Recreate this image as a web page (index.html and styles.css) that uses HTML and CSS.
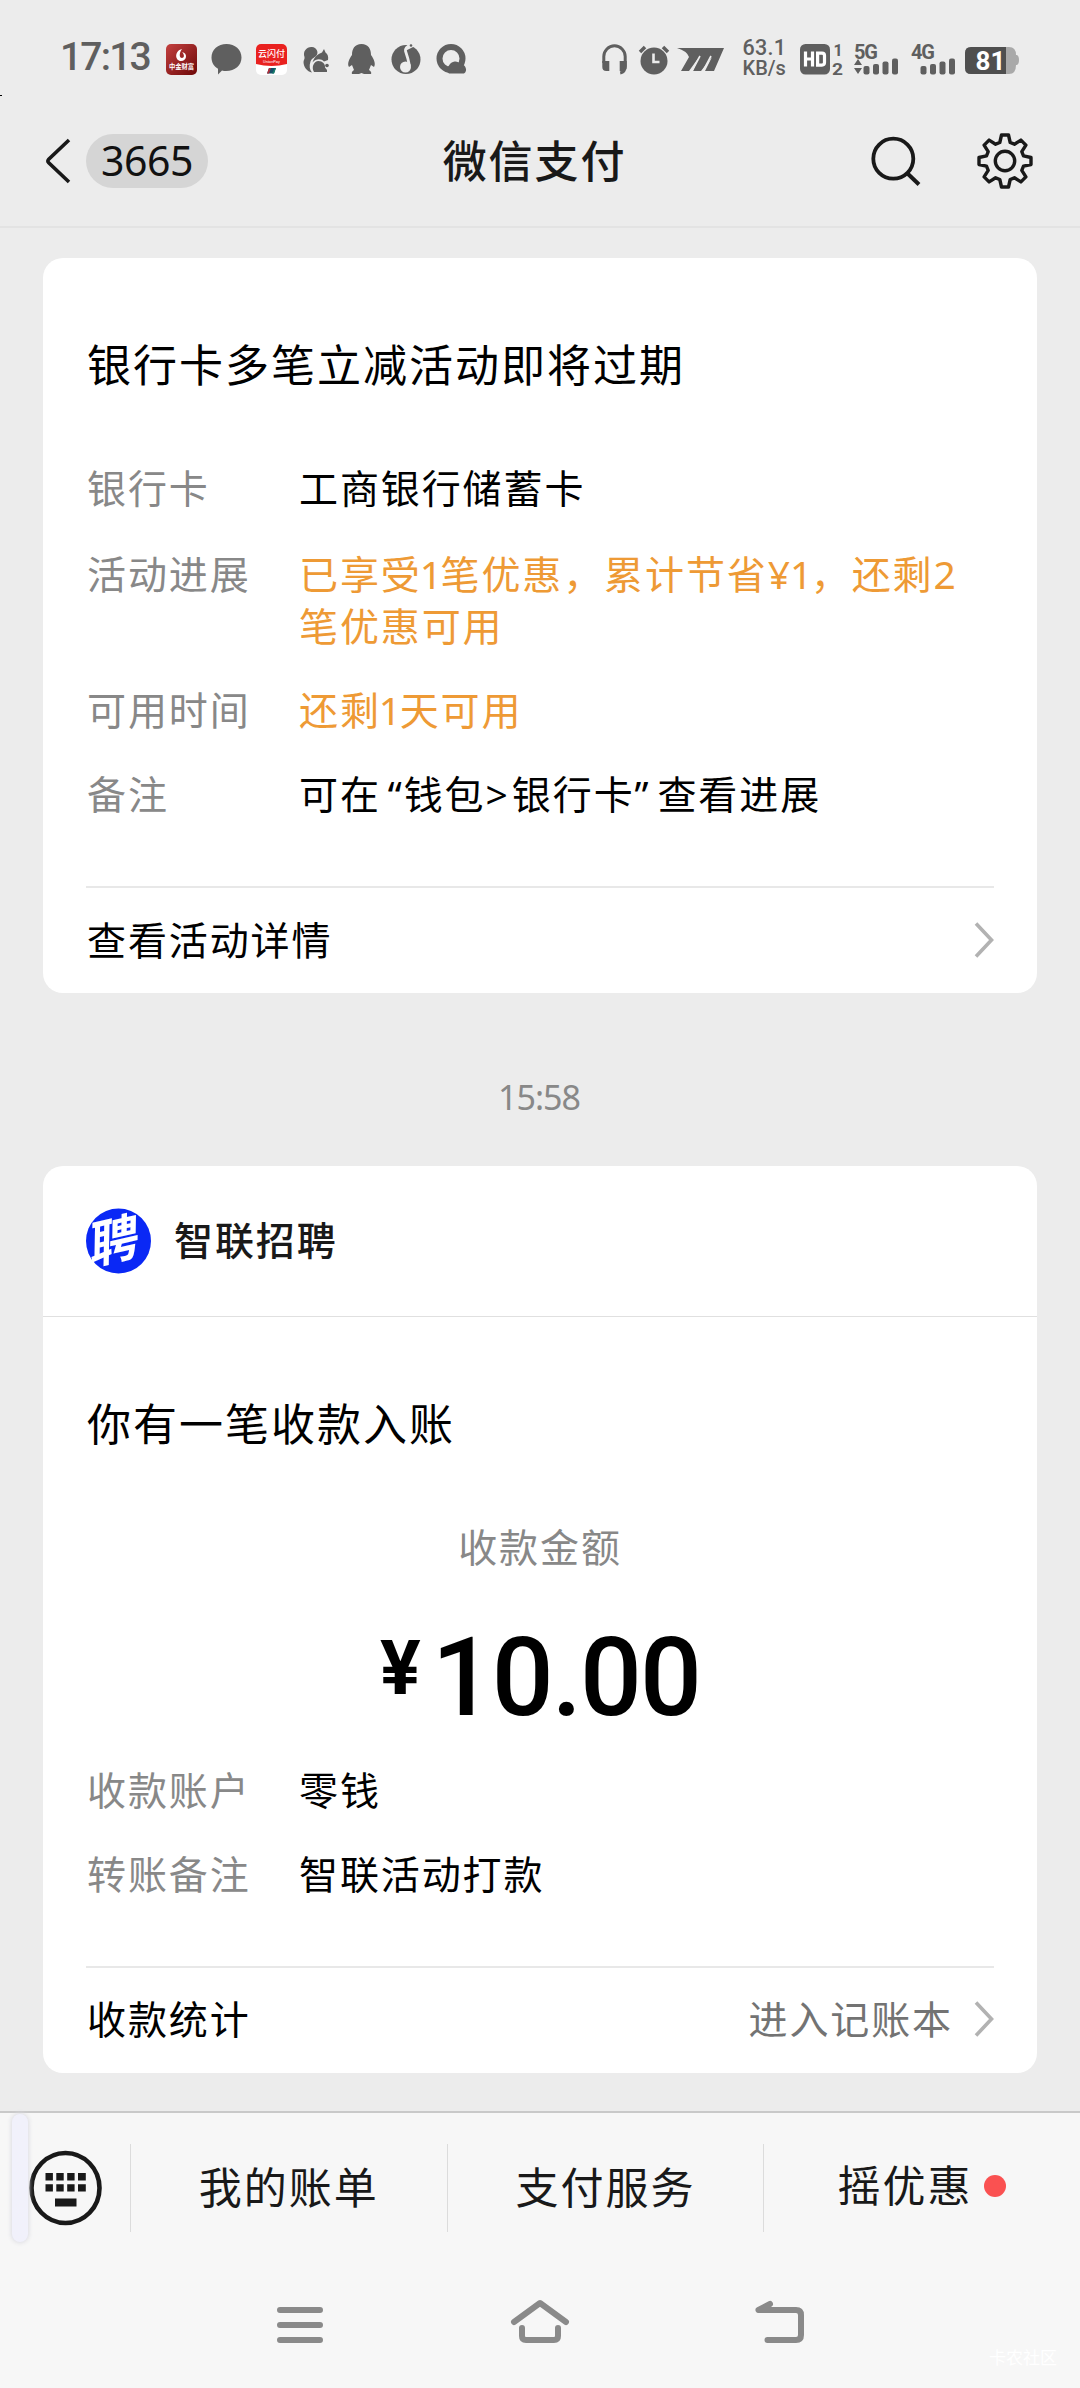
FILE: index.html
```html
<!DOCTYPE html>
<html lang="zh-CN">
<head>
<meta charset="utf-8">
<title>微信支付</title>
<link rel="stylesheet" href="styles.css">
</head>
<body>
<div class="screen">
  <header class="statusbar">
    <div class="clock">17:13</div>
    <div class="notices">
      <svg width="31" height="31" viewBox="0 0 31 31"><defs><linearGradient id="r" x1="0" y1="0" x2="1" y2="1"><stop offset="0" stop-color="#c4403f"/><stop offset="1" stop-color="#6d0808"/></linearGradient></defs><rect width="31" height="31" rx="5" fill="url(#r)"/><path d="M16 5c-8 2-7 12-1 12 6 0 7-8 1-9 3 3 2 6 0 6-3 0-3-5 0-9z" fill="#fff"/><text x="15.5" y="25" text-anchor="middle" font-size="6.3" font-weight="700" fill="#fff">中金财富</text></svg>
      <svg width="31" height="31" viewBox="0 0 31 31"><path d="M15.500 0C24 0 30.500 5.600 30.500 13.500S24 27 15 27q-2 0-4-.5L7 30.500V24.800C3 22.500.5 18.500.5 13.500.5 5.600 7 0 15.500 0z" fill="#5f5f5f"/></svg>
      <svg width="31" height="31" viewBox="0 0 31 31"><rect width="31" height="31" rx="5" fill="#fff"/><path d="M0 20V5a5 5 0 015-5h21a5 5 0 015 5v15q-15.500 4-31 0z" fill="#e9211f"/><text x="15.500" y="13" text-anchor="middle" font-size="9" font-weight="500" fill="#fff">云闪付</text><text x="15.500" y="18.500" text-anchor="middle" font-size="4" fill="#fff">UnionPay</text><path d="M13 24h7l-2 5.500h-7z" fill="#164f67"/><path d="M13 24h2l-2 5.500h-2z" fill="#b32d3a"/><path d="M19 24h1l-2 5.500h-2z" fill="#16806b"/></svg>
      <svg width="31" height="31" viewBox="0 0 31 31"><g fill="#5f5f5f"><path d="M3.500 13C1.500 7 6 2.500 11 3c4.500.5 7 5 4.500 8.500-1.500 2-4.500 2.500-6 6C8 22 8.500 25.500 11 28.500 6 27.500 2.500 23 2.500 18c0-2 1.500-3 1-5z"/><path d="M11.500 18.500C13 13.500 16.500 10 21 8.500L23 5l1.500 3.500C27 10 27.500 13 27 16l-4 1.500c-3-3-8-3-11.500 1z"/><path d="M17.500 17c4 0 7 3 6.500 6.500l2 2.500v2H13c-3-5 0-11 4.500-11z"/><circle cx="26" cy="21.500" r="1.800"/></g></svg>
      <svg width="31" height="31" viewBox="0 0 31 31"><path d="M15.500 0c7 0 9.500 5 9.500 11 3 4 5 9 3 12l-3-2-2 5q3 2 2 4h-7l-2.500-1L13 30H6q-1-2 2-4l-2-5-3 2c-2-3 0-8 3-12 0-6 2.500-11 9.500-11z" fill="#5f5f5f"/></svg>
      <svg width="31" height="31" viewBox="0 0 31 31"><circle cx="15" cy="15.500" r="14.500" fill="#5f5f5f"/><g fill="none" stroke="#ececec" stroke-width="2.800"><path d="M20 1Q14 3 14.500 7 17 14 18.500 22"/><path d="M15 5L22 1.500"/></g><circle cx="14.500" cy="23" r="5.500" fill="#ececec"/><circle cx="20" cy="1.500" r="1.300" fill="#5f5f5f"/></svg>
      <svg width="31" height="31" viewBox="0 0 31 31"><circle cx="15" cy="14.500" r="11.500" fill="none" stroke="#5f5f5f" stroke-width="6"/><path d="M13 29.500a5 5 0 010-8 7 7 0 0112-1 5 5 0 013 9z" fill="#5f5f5f"/></svg>
    </div>
    <div class="system">
      <svg class="headset" width="25" height="31" viewBox="0 0 25 31"><path d="M1.800 19V12.500a10.500 10.500 0 0121.400 0V22q0 6-5 7" fill="none" stroke="#5f5f5f" stroke-width="3"/><path d="M.3 17h7v10h-3a4 4 0 01-4-4zM24.700 17h-7v10h3a4 4 0 004-4z" fill="#5f5f5f"/></svg>
      <svg class="alarm" width="30" height="31" viewBox="0 0 30 31"><circle cx="15" cy="17" r="13.500" fill="#5f5f5f"/><path d="M1 8l5-5M29 8l-5-5" stroke="#5f5f5f" stroke-width="3.500"/><path d="M14.500 9.500v8.500h6" fill="none" stroke="#ececec" stroke-width="2.600"/></svg>
      <svg class="sport" width="48" height="31" viewBox="0 0 48 31"><path d="M0 4h47l-10 23H28l7-14-11 14H16l6-14L12 27H4l8-14Q10 7 0 4z" fill="#5f5f5f"/><path d="M23 12l-8 15M34 12l-8 15" stroke="#ececec" stroke-width="1.600"/></svg>
      <div class="speed"><span>63.1</span><span class="unit">KB/s</span></div>
      <svg class="hd" width="43" height="31" viewBox="0 0 43 31"><rect width="30" height="30.500" rx="5.500" fill="#5f5f5f"/><g fill="none" stroke="#fff" stroke-width="3.200"><path d="M5.500 7.500v15M12.500 7.500v15M5.500 15h7M17.600 9.100H22q2.500 0 2.500 2.500v7q0 2.500-2.500 2.500h-4.400z"/></g><text x="33.500" y="12" font-size="16" font-weight="700" fill="#5f5f5f">1</text><text x="32" y="30.500" font-size="16" font-weight="700" fill="#5f5f5f" textLength="11" lengthAdjust="spacingAndGlyphs">2</text></svg>
      <svg class="signal" width="46" height="31" viewBox="0 0 46 31"><text x="0" y="14.500" font-size="20" font-weight="700" fill="#5f5f5f" textLength="24">5G</text><path d="M0 21l4-6 4 6zM0 24h8l-4 6z" fill="#5f5f5f"/><g fill="#5f5f5f"><rect x="9.500" y="22" width="6" height="8.500" rx="2"/><rect x="19" y="20" width="6" height="10.500" rx="2"/><rect x="28.500" y="17.500" width="6" height="13" rx="2"/><rect x="38" y="14.500" width="6" height="16" rx="2"/></g></svg>
      <svg class="signal second" width="46" height="31" viewBox="0 0 46 31"><text x="0" y="14.500" font-size="20" font-weight="700" fill="#5f5f5f" textLength="24">4G</text><g fill="#5f5f5f"><rect x="9.500" y="22" width="6" height="8.500" rx="2"/><rect x="19" y="20" width="6" height="10.500" rx="2"/><rect x="28.500" y="17.500" width="6" height="13" rx="2"/><rect x="38" y="14.500" width="6" height="16" rx="2"/></g></svg>
      <svg class="battery" width="54" height="31" viewBox="0 0 54 31"><path d="M6 3h38q7 0 7 8h1q2 1 2 5t-2 5h-1q0 9-7 9H6q-6 0-6-6V9q0-6 6-6z" fill="#a9a9a9"/><path d="M6 3h35v27H6q-6 0-6-6V9q0-6 6-6z" fill="#4f4f4f"/><text x="25.500" y="26" text-anchor="middle" font-size="26" font-weight="700" fill="#fff">81</text></svg>
    </div>
    <i class="speck"></i>
  </header>

  <nav class="titlebar">
    <div class="back">
      <svg width="26" height="48" viewBox="0 0 26 48"><path d="M24 3L3.500 22.500q-1.200 1.500 0 3L24 45" fill="none" stroke="#191919" stroke-width="3.600"/></svg>
      <span class="unread">3665</span>
    </div>
    <h1 class="heading">微信支付</h1>
    <div class="actions">
      <svg width="54" height="54" viewBox="0 0 54 54"><circle cx="25.300" cy="24.700" r="20" fill="none" stroke="#191919" stroke-width="3.800"/><path d="M39 39l12 11.500" stroke="#191919" stroke-width="4"/></svg>
      <svg width="56" height="56" viewBox="-28 -28 56 56"><g fill="none" stroke="#191919" stroke-width="3.400" stroke-linejoin="round"><path d="M-5.200-18.500L-3.500-26H3.500L5.200-18.500 9.400-16.800 15.900-20.900 20.900-15.900 16.800-9.400 18.500-5.200 26-3.500V3.500L18.500 5.200 16.800 9.400 20.900 15.900 15.900 20.900 9.400 16.800 5.200 18.500 3.500 26H-3.500L-5.200 18.500-9.400 16.800-15.900 20.900-20.900 15.900-16.800 9.400-18.500 5.200-26 3.500V-3.500L-18.500-5.200-16.800-9.400-20.900-15.900-15.900-20.900-9.400-16.800z"/><circle r="9.700"/></g></svg>
    </div>
  </nav>

  <main class="feed">
    <section class="card">
      <div class="content">
        <h2 class="card-title">银行卡多笔立减活动即将过期</h2>
        <dl class="details">
          <div class="row lead"><dt>银行卡</dt><dd>工商银行储蓄卡</dd></div>
          <div class="row"><dt>活动进展</dt><dd class="hot">已享受<span class="one">1</span>笔优惠，累计节省¥<span class="one">1</span>，还剩2<br>笔优惠可用</dd></div>
          <div class="row"><dt>可用时间</dt><dd class="hot">还剩<span class="one">1</span>天可用</dd></div>
          <div class="row"><dt>备注</dt><dd>可在<span class="open">“</span>钱包<span class="gt">&gt;</span>银行卡<span class="close">”</span>查看进展</dd></div>
        </dl>
        <div class="more">
          <span>查看活动详情</span>
          <svg class="chevron" width="20" height="36" viewBox="0 0 20 36"><path d="M2 1.500L17.500 18 2 34.500" fill="none" stroke="#b2b2b2" stroke-width="3.600"/></svg>
        </div>
      </div>
    </section>

    <time class="stamp">15:58</time>

    <section class="card">
      <div class="merchant">
        <svg width="66" height="66" viewBox="0 0 66 66"><circle cx="32.500" cy="33" r="32.500" fill="#0a28f5"/><text transform="translate(4 57) rotate(-13) skewX(-14)" font-size="50" font-weight="700" fill="#fff">聘</text></svg>
        <span>智联招聘</span>
      </div>
      <div class="content">
        <h2 class="card-title">你有一笔收款入账</h2>
        <div class="amount-label">收款金额</div>
        <div class="amount"><span class="yen">¥</span><span class="number">10.00</span></div>
        <dl class="details receipt">
          <div class="row"><dt>收款账户</dt><dd>零钱</dd></div>
          <div class="row"><dt>转账备注</dt><dd>智联活动打款</dd></div>
        </dl>
        <div class="more">
          <span>收款统计</span>
          <span class="link">进入记账本</span>
          <svg class="chevron" width="20" height="36" viewBox="0 0 20 36"><path d="M2 1.500L17.500 18 2 34.500" fill="none" stroke="#b2b2b2" stroke-width="3.600"/></svg>
        </div>
      </div>
    </section>
  </main>

  <footer class="bottom">
    <i class="handle"></i>
    <div class="menu">
      <div class="keyboard"><svg width="74" height="76" viewBox="0 0 74 76"><ellipse cx="36.500" cy="38" rx="34" ry="35" fill="none" stroke="#191919" stroke-width="4.600"/><path d="M16.500 23h7.400v7.400h-7.400zM27.300 23h7.400v7.400h-7.400zM38.200 23h7.400v7.400h-7.400zM49 23h7.800v7.400H49zM16.500 34.200h7.400v7.400h-7.400zM27.300 34.200h7.400v7.400h-7.400zM38.200 34.200h7.400v7.400h-7.400zM49 34.200h7.800v7.400H49zM26 48.500h21.500v8H26z" fill="#191919"/></svg></div>
      <div class="item">我的账单</div>
      <div class="item">支付服务</div>
      <div class="item promo">摇优惠<i class="dot"></i></div>
    </div>
    <div class="navkeys">
      <svg width="60" height="50" viewBox="0 0 60 50"><path d="M10 10h40M10 25h40M10 40h40" stroke="#8a8a8a" stroke-width="6" stroke-linecap="round"/></svg>
      <svg width="60" height="50" viewBox="0 0 60 50"><g fill="none" stroke="#8a8a8a" stroke-width="6" stroke-linecap="round" stroke-linejoin="round"><path d="M4 22L30 3 56 22M12 28v8q0 4 4 4h28q4 0 4-4v-8"/></g></svg>
      <svg width="60" height="50" viewBox="0 0 60 50"><path d="M20 4L8.500 10H46q5 0 5 5v20q0 5-5 5H17.500" fill="none" stroke="#8a8a8a" stroke-width="6" stroke-linecap="round" stroke-linejoin="round"/></svg>
    </div>
    <span class="mark">卡农社区</span>
  </footer>
</div>
</body>
</html>
```
FILE: styles.css
```css
* { box-sizing: border-box; }

body {
  margin: 0;
  background: #ececec;
  color: #000;
  font-family: "Noto Sans", "Noto Sans CJK SC", sans-serif;
  font-size: 39px;
  letter-spacing: 1.9px;
}

h1, h2, dl, dd { margin: 0; font-weight: 400; }
svg { display: block; flex: none; overflow: visible; letter-spacing: 0; }

.screen {
  display: flex;
  flex-direction: column;
  width: 1080px;
  height: 2388px;
  overflow: hidden;
}

/* Status bar */
.statusbar {
  position: relative;
  display: flex;
  height: 96px;
  padding: 44px 60px 0 60px;
  color: #5f5f5f;
  font-family: Roboto, "Noto Sans CJK SC", sans-serif;
}
.clock {
  width: 105.500px;
  margin-top: -11px;
  font-size: 39px;
  font-weight: 500;
  line-height: 48px;
  letter-spacing: -1.800px;
}
.notices { display: flex; gap: 14px; }
.system { display: flex; margin-left: 135px; }
.headset { margin-right: 12px; }
.alarm { margin-right: 8px; }
.sport { margin-right: 18px; }
.speed {
  display: flex;
  flex-direction: column;
  width: 57px;
  margin-top: -6px;
  font-size: 21.500px;
  font-weight: 500;
  line-height: 20px;
  letter-spacing: 0.300px;
}
.speed span { height: 20px; }
.speed .unit { font-size: 20px; letter-spacing: 0; }
.hd { margin-right: 11px; }
.signal { margin-right: 11px; }
.second { margin-right: 8px; }
.speck {
  position: absolute;
  left: 0;
  bottom: 0;
  width: 2px;
  height: 1px;
  background: #000;
}

/* Title bar */
.titlebar {
  display: grid;
  grid-template-columns: 1fr auto 1fr;
  align-items: center;
  height: 132px;
  padding: 0 47px 0 45px;
  border-bottom: 2px solid #e3e3e3;
}
.back { display: flex; align-items: center; gap: 15px; }
.unread {
  width: 122px;
  height: 54px;
  border-radius: 27px;
  background: #d5d5d5;
  color: #111;
  font-size: 41px;
  line-height: 53px;
  letter-spacing: -0.400px;
  text-align: center;
}
.heading {
  padding-right: 9px;
  color: #191919;
  font-size: 44px;
  font-weight: 500;
  line-height: 60px;
}
.actions { display: flex; align-items: center; justify-content: flex-end; gap: 55px; }

/* Message cards */
.feed { height: 1883px; padding: 30px 43px 0; }
.card { border-radius: 20px; background: #fff; }
.content { padding: 77px 43px 0; }
.card-title {
  padding-left: 1px;
  font-size: 44px;
  line-height: 60px;
  letter-spacing: 2px;
}
.details {
  display: flex;
  flex-direction: column;
  gap: 32.500px;
  margin-top: 67px;
}
.row {
  display: grid;
  grid-template-columns: 212px 1fr;
  padding-left: 1px;
  line-height: 51.500px;
  white-space: nowrap;
}
.lead { margin-bottom: 2px; }
.row dt, .amount-label { color: #888; }
.hot { color: #ee9a35; }

/* Tighter Latin glyphs inside Chinese text */
.one { margin-left: -2px; letter-spacing: -1.500px; }
.open { margin-left: 7px; }
.close { margin-right: 7px; }
.gt { letter-spacing: 4px; }

.more {
  display: flex;
  align-items: center;
  height: 107px;
  margin-top: 67px;
  padding-left: 1px;
  border-top: 2px solid #e8e8e8;
  line-height: 52px;
}
.more span { margin-top: -2px; }
.chevron { margin: -2px 0 0 auto; }
.more .link { margin-left: auto; color: #737373; }
.link + .chevron { margin-left: 21px; }
.stamp {
  display: block;
  margin: 79px 2px 44px 0;
  color: #888;
  font-size: 34px;
  line-height: 50px;
  letter-spacing: -1px;
  text-align: center;
}
.merchant {
  display: flex;
  align-items: center;
  gap: 22px;
  height: 151px;
  padding-left: 43px;
  border-bottom: 1px solid #e0e0e0;
  color: #191919;
  font-weight: 500;
  line-height: 50px;
}
.merchant span { margin-top: -2px; }
.amount-label {
  margin-top: 67px;
  line-height: 52px;
  text-align: center;
}
.amount {
  display: flex;
  justify-content: center;
  height: 103px;
  margin-top: 51px;
  font-family: Roboto, sans-serif;
  font-weight: 500;
  letter-spacing: 0;
}
.yen { margin-right: 11px; font-size: 76px; font-weight: 700; line-height: 88px; }
.number { font-size: 109px; line-height: 108px; letter-spacing: -2px; }
.receipt { margin-top: 37px; }
.receipt + .more { margin-top: 66px; }

/* Bottom menu and system keys */
.bottom {
  position: relative;
  height: 277px;
  border-top: 2px solid #c9c9c9;
  background: #f7f7f7;
}
.handle {
  position: absolute;
  left: 12px;
  top: 1px;
  width: 16px;
  height: 128px;
  border-radius: 8px;
  background: #f1f1fb;
  box-shadow: 0 0 4px 1px #dcdce2;
}
.menu { display: flex; align-items: center; height: 149px; }
.keyboard { width: 130px; padding-left: 29px; }
.item {
  display: flex;
  align-items: center;
  justify-content: center;
  width: 316.600px;
  height: 88px;
  border-left: 1px solid #dcdcdc;
  color: #191919;
  font-size: 43px;
  line-height: 88px;
  letter-spacing: 2px;
}
.promo { padding-bottom: 4px; }
.dot {
  width: 22px;
  height: 22px;
  margin-left: 12px;
  border-radius: 50%;
  background: #fa5151;
}
.navkeys { display: flex; justify-content: center; gap: 180px; margin-top: 38px; }
.mark {
  position: absolute;
  right: 23px;
  bottom: 18px;
  color: #fff;
  font-size: 17px;
  line-height: 24px;
  letter-spacing: 0;
}
```
